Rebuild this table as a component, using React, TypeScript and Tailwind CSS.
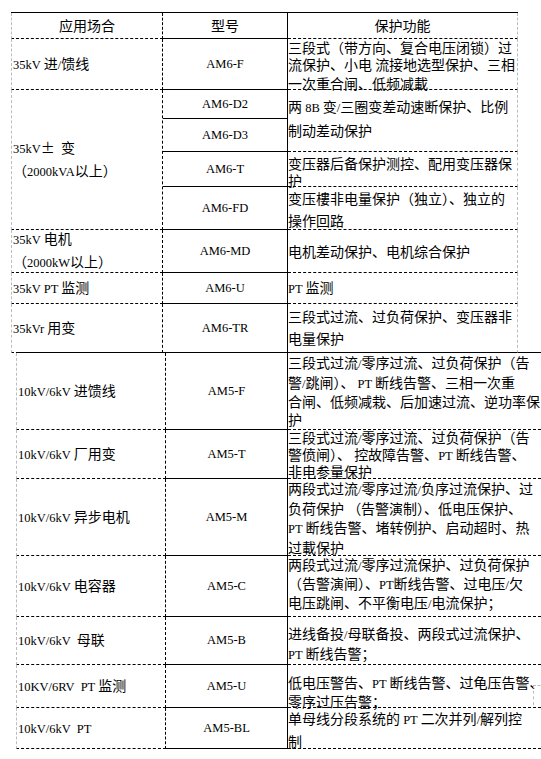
import React from "react";

// latin runs: small serif face, close to the half-width latin of the source document
function Mix({ text }: { text: string }) {
  const parts = text.split(/([\x20-\x7e]+)/);
  return (
    <>
      {parts.map((p, i) =>
        /^[\x20-\x7e]+$/.test(p) ? (
          <span key={i} className="font-['Liberation_Serif',serif] text-[12.5px]">
            {p}
          </span>
        ) : (
          <React.Fragment key={i}>{p}</React.Fragment>
        )
      )}
    </>
  );
}

function Lines({ lines }: { lines: string[] }) {
  return (
    <>
      {lines.map((l, i) => (
        <div key={i} className="whitespace-pre">
          <Mix text={l} />
        </div>
      ))}
    </>
  );
}

type Desc = { lines: string[]; pt: number; lh: number; center?: boolean };

type Row = {
  place?: string[];
  placeSpan?: number;
  model: string;
  desc?: Desc;
  descSpan?: number;
};

const topRows: Row[] = [
  {
    place: ["35kV 进/馈线"],
    model: "AM6-F",
    desc: {
      lines: ["三段式（带方向、复合电压闭锁）过", "流保护、小电 流接地选型保护、三相", "一次重合闸、低频减載"],
      pt: 0,
      lh: 17,
    },
  },
  {
    place: ["35kV±  变", "（2000kVA以上）"],
    placeSpan: 4,
    model: "AM6-D2",
    desc: { lines: ["两 8B 变/三圈变差动速断保护、比例", "制动差动保护"], pt: 5, lh: 22 },
    descSpan: 2,
  },
  { model: "AM6-D3" },
  {
    model: "AM6-T",
    desc: { lines: ["变压器后备保护测控、配用变压器保", "护"], pt: 3, lh: 17 },
  },
  {
    model: "AM6-FD",
    desc: { lines: ["变压樓非电量保护（独立）、独立的", "操作回路"], pt: 0, lh: 22 },
  },
  {
    place: ["35kV 电机", "（2000kW以上）"],
    model: "AM6-MD",
    desc: { lines: ["电机差动保护、电机综合保护"], pt: 0, lh: 17, center: true },
  },
  {
    place: ["35kV PT 监测"],
    model: "AM6-U",
    desc: { lines: ["PT 监测"], pt: 0, lh: 17, center: true },
  },
  {
    place: ["35kVr 用变"],
    model: "AM6-TR",
    desc: { lines: ["三段式过流、过负荷保护、变压器非", "电量保护"], pt: 1, lh: 22 },
  },
];

const bottomRows: Row[] = [
  {
    place: ["10kV/6kV 进馈线"],
    model: "AM5-F",
    desc: {
      lines: [
        "三段式过流/零序过流、过负荷保护（告",
        "警/跳闸）、 PT 断线告警、三相一次重",
        "合闸、低频减栽、后加速过流、逆功率保",
        "护",
      ],
      pt: 1,
      lh: 17.5,
    },
  },
  {
    place: ["10kV/6kV 厂用变"],
    model: "AM5-T",
    desc: {
      lines: ["三段式过流/零序过流、过负荷保护（告", "警偾闸）、 控故障告警、PT 断线告警、", "非电参量保护"],
      pt: 0,
      lh: 15,
    },
  },
  {
    place: ["10kV/6kV 异步电机"],
    model: "AM5-M",
    desc: {
      lines: [
        "两段式过流/零序过流/负序过流保护、过",
        "负荷保护 （告警演制）、低电压保护、",
        "PT 断线告警、堵转例护、启动超时、热",
        "过載保护",
      ],
      pt: 1,
      lh: 17.5,
    },
  },
  {
    place: ["10kV/6kV 电容器"],
    model: "AM5-C",
    desc: {
      lines: ["两段式过流/零序过流保护、过负荷保护", "（告警演闸）、PT断线告警、过电压/欠", "电压跳闸、不平衡电压/电流保护；"],
      pt: 0,
      lh: 17,
    },
  },
  {
    place: ["10kV/6kV  母联"],
    model: "AM5-B",
    desc: { lines: ["进线备投/母联备投、两段式过流保护、", "PT 断线告警；"], pt: 7, lh: 18 },
  },
  {
    place: ["10KV/6RV  PT 监测"],
    model: "AM5-U",
    desc: { lines: ["低电压警告、PT 断线告警、过龟压告警、", "零序过压告警；"], pt: 9, lh: 17 },
  },
  {
    place: ["10kV/6kV  PT"],
    model: "AM5-BL",
    desc: { lines: ["单母线分段系统的 PT 二次并列/解列控", "制"], pt: 0, lh: 21 },
  },
];

const spanClass: Record<number, string> = {
  2: "row-span-2",
  4: "row-span-4",
};

function Table({ rows, cols, heights, left, header }: {
  rows: Row[];
  cols: string;
  heights: string;
  left: string;
  header?: boolean;
}) {
  return (
    <div className={`grid border-t border-black ${cols} ${heights} ${left}`}>
      {header && (
        <>
          <div className="flex items-center justify-center border-l border-dashed border-l-[#bdbdbd] border-r border-r-black border-b border-b-black">
            应用场合
          </div>
          <div className="flex items-center justify-center border-r border-b border-black">型号</div>
          <div className="flex items-center justify-center border-b border-b-black border-r border-dashed border-r-[#bdbdbd]">
            保护功能
          </div>
        </>
      )}
      {rows.map((r) => (
        <React.Fragment key={r.model}>
          {r.place && (
            <div
              className={`flex flex-col justify-center pl-px leading-[21px] border-l border-dashed border-l-[#bdbdbd] border-r border-r-black border-b border-b-black ${
                r.placeSpan ? spanClass[r.placeSpan] : ""
              }`}
            >
              <Lines lines={r.place} />
            </div>
          )}
          <div className="flex items-center justify-center border-r border-b border-black">
            <Mix text={r.model} />
          </div>
          {r.desc && (
            <div
              className={`overflow-visible border-b border-b-black border-r border-dashed border-r-[#bdbdbd] ${
                r.descSpan ? spanClass[r.descSpan] : ""
              } ${r.desc.center ? "flex flex-col justify-center" : ""}`}
              style={{ paddingTop: r.desc.pt, lineHeight: `${r.desc.lh}px` }}
            >
              <Lines lines={r.desc.lines} />
            </div>
          )}
        </React.Fragment>
      ))}
    </div>
  );
}

export default function App() {
  return (
    <div className="relative h-[759px] w-[541px] overflow-hidden bg-white text-[14px] text-black font-['Noto_Sans_CJK_SC',sans-serif]">
      <div className="pt-[12px]">
        <Table
          header
          rows={topRows}
          left="ml-[11px] w-[507px]"
          cols="grid-cols-[152px_125px_230px]"
          heights="grid-rows-[26px_51px_29px_33px_35px_43px_43px_31px_49px]"
        />
        <Table
          rows={bottomRows}
          left="-mt-px ml-[16px] w-[560px] border-t-black"
          cols="grid-cols-[150px_122px_288px]"
          heights="grid-rows-[77px_49px_77px_61px_48px_43px_41px]"
        />
      </div>
      {/* stray frame corner at the right edge */}
      <div className="absolute left-[533px] top-[685px] h-[20px] w-[12px] border-l border-t border-dashed border-[#bdbdbd]" />
    </div>
  );
}
